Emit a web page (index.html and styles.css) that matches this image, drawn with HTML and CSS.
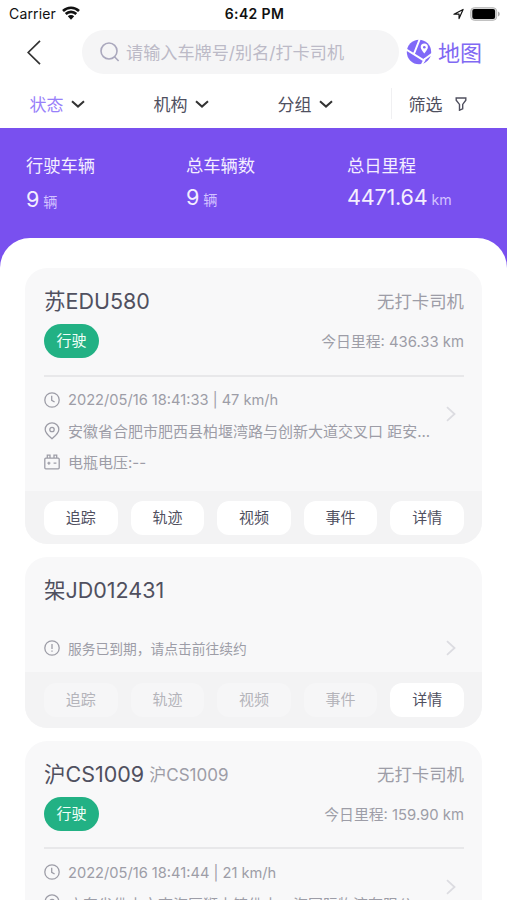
FILE: index.html
```html
<!DOCTYPE html>
<html lang="zh-CN">
<head>
<meta charset="utf-8">
<meta name="viewport" content="width=device-width, initial-scale=1">
<title>车辆列表</title>
<link rel="stylesheet" href="styles.css">
</head>
<body>
<svg class="defs" aria-hidden="true">
  <symbol id="down" viewBox="0 0 14 8"><path d="M1 1.2L7 6.6L13 1.2"/></symbol>
  <symbol id="right" viewBox="0 0 10 16"><path d="M1 1.2L8.5 8L1 14.8"/></symbol>
  <symbol id="clock" viewBox="0 0 16 16"><circle cx="8" cy="8" r="7.2"/><path d="M7.7 3.7V8.3L10.6 10"/></symbol>
  <symbol id="pin" viewBox="0 0 16 18"><path d="M8 16.7C5.5 14.5 1.2 11.2 1.2 7.4A6.8 6.6 0 0 1 14.8 7.4C14.8 11.2 10.5 14.5 8 16.7Z"/><circle cx="8" cy="7.5" r="2.2"/></symbol>
  <symbol id="battery" viewBox="0 0 16 16"><rect x=".8" y="4.2" width="14.4" height="10.6" rx="1"/><path d="M3.3 4V1.2H6V4M10 4V1.2H12.7V4M3.4 9.2H6.4M4.9 7.7V10.7M9.6 9.2H12.4"/></symbol>
  <symbol id="alert" viewBox="0 0 16 16"><circle cx="8" cy="8" r="7.2"/><path d="M8 4V9M8 10.4V11.8"/></symbol>
</svg>

<div class="status-bar">
  <div class="carrier">Carrier
    <svg class="wifi" viewBox="0 0 18 14"><path d="M1 5A11.5 11.5 0 0 1 17 5M3.7 8A7.6 7.6 0 0 1 14.3 8"/><path class="solid" d="M5.8 10.3A4.6 4.6 0 0 1 12.2 10.3L9 13.8Z"/></svg>
  </div>
  <div class="time">6:42 PM</div>
  <div class="power">
    <svg class="locate" viewBox="0 0 12 12"><path d="M1 6.2L11 1L6.6 11V6.2Z"/></svg>
    <svg class="cell" viewBox="0 0 30 14"><rect class="shell" x=".7" y=".7" width="26" height="12.6" rx="3.6"/><rect x="2.3" y="2.1" width="22.8" height="9.8" rx="2"/><path class="tip" d="M28 4.6Q29.8 5.4 29.8 7T28 9.4Z"/></svg>
  </div>
</div>

<header class="header">
  <svg class="back" viewBox="0 0 14 25"><path d="M13 .8L1.2 12.5L13 24.2"/></svg>
  <div class="search">
    <svg viewBox="0 0 20 20"><circle cx="9" cy="9" r="8"/><path d="M14.5 14.8L18.6 19"/></svg>
    <span>请输入车牌号/别名/打卡司机</span>
  </div>
  <div class="map">
    <svg viewBox="0 0 26 26"><circle class="globe" cx="13" cy="13" r="12.2"/><path class="road" d="M-1 9.8L19 22.2M13.8 0L7.5 16M19 19.5L15.2 27M17.5 21L26 14.8"/><path class="marker" d="M18.3 14.4C16.4 11.8 14.7 10 14.7 8.2A3.6 3.6 0 0 1 21.9 8.2C21.9 10 20.2 11.8 18.3 14.4Z"/><circle class="globe" cx="18.3" cy="8.3" r="1.3"/></svg>
    <span>地图</span>
  </div>
</header>

<nav class="filters">
  <div class="filter active">状态<svg><use href="#down"/></svg></div>
  <div class="filter">机构<svg><use href="#down"/></svg></div>
  <div class="filter">分组<svg><use href="#down"/></svg></div>
  <div class="sift">筛选<svg viewBox="0 0 12 14"><path d="M1.2 1H10.8V3.2L7.7 7.4V11.8L4.5 13.2V7.4L1.2 3.2Z"/></svg></div>
</nav>

<section class="summary">
  <div class="stat low"><div class="label">行驶车辆</div><div class="value"><span>9</span><small>辆</small></div></div>
  <div class="stat"><div class="label">总车辆数</div><div class="value"><span>9</span><small>辆</small></div></div>
  <div class="stat"><div class="label">总日里程</div><div class="value"><span>4471.64</span><small>km</small></div></div>
</section>

<main class="list">
  <article class="card">
    <div class="head"><h2>苏EDU580</h2><span class="driver">无打卡司机</span></div>
    <div class="state"><span class="pill">行驶</span><span class="mileage">今日里程: 436.33 km</span></div>
    <div class="info">
      <div class="rows">
        <div class="row"><svg><use href="#clock"/></svg><span class="stamp">2022/05/16 18:41:33 | 47 km/h</span></div>
        <div class="row"><svg class="tall"><use href="#pin"/></svg><span>安徽省合肥市肥西县柏堰湾路与创新大道交叉口 距安...</span></div>
        <div class="row"><svg><use href="#battery"/></svg><span>电瓶电压:--</span></div>
      </div>
      <svg class="go"><use href="#right"/></svg>
    </div>
    <div class="actions"><button>追踪</button><button>轨迹</button><button>视频</button><button>事件</button><button>详情</button></div>
  </article>

  <article class="card expired">
    <div class="head"><h2>架JD012431</h2></div>
    <div class="info">
      <div class="rows">
        <div class="row notice"><svg><use href="#alert"/></svg><span>服务已到期，请点击前往续约</span></div>
      </div>
      <svg class="go"><use href="#right"/></svg>
    </div>
    <div class="actions"><button disabled>追踪</button><button disabled>轨迹</button><button disabled>视频</button><button disabled>事件</button><button>详情</button></div>
  </article>

  <article class="card partial">
    <div class="head"><h2>沪CS1009</h2><span class="alias">沪CS1009</span><span class="driver">无打卡司机</span></div>
    <div class="state"><span class="pill">行驶</span><span class="mileage">今日里程: 159.90 km</span></div>
    <div class="info">
      <div class="rows">
        <div class="row"><svg><use href="#clock"/></svg><span class="stamp">2022/05/16 18:41:44 | 21 km/h</span></div>
        <div class="row"><svg class="tall"><use href="#pin"/></svg><span>广东省佛山市南海区狮山镇佛山一海国际物流有限公...</span></div>
      </div>
      <svg class="go"><use href="#right"/></svg>
    </div>
  </article>
</main>
</body>
</html>
```

FILE: styles.css
```css
* { box-sizing: border-box; }
body {
  display: flex;
  flex-direction: column;
  margin: 0;
  height: 900px;
  overflow: hidden;
  background: #fff;
  color: #50505f;
  font-family: Inter, "Noto Sans CJK SC", sans-serif;
  font-size: 15px;
}
svg { display: block; flex: none; fill: none; stroke: currentColor; }
.defs { display: none; }

.status-bar {
  display: grid;
  flex: none;
  grid-template-columns: 1fr auto 1fr;
  align-items: center;
  height: 28px;
  padding: 0 7px 1px 9px;
  color: #111;
  font-size: 14px;
}
.carrier { display: flex; align-items: center; gap: 6px; letter-spacing: .15px; }
.wifi { width: 18px; height: 14px; margin-top: -2px; stroke-width: 2.6; }
.wifi .solid { fill: currentColor; stroke: none; }
.time { font-weight: 600; letter-spacing: .35px; }
.power { display: flex; align-items: center; justify-content: flex-end; gap: 6px; }
.locate { width: 11px; height: 12px; stroke-width: 1.3; stroke-linejoin: round; }
.cell { width: 30px; height: 14px; fill: #000; stroke: none; }
.cell .shell { fill: #ddd; stroke: #b5b5b5; }
.cell .tip { fill: #aaa; }

.header { display: flex; flex: none; align-items: center; height: 48px; padding-left: 27px; }
.back { width: 14px; height: 25px; color: #333; stroke-width: 1.7; }
.search {
  display: flex;
  align-items: center;
  gap: 6px;
  width: 317px;
  height: 44px;
  margin-left: 41px;
  padding-left: 18px;
  border-radius: 22px;
  background: #f5f5f6;
  color: #bcbac7;
  font-size: 17.15px;
  white-space: nowrap;
}
.search span { margin-top: -1px; }
.search svg { width: 20px; height: 20px; stroke: #aaa8bd; stroke-width: 1.6; }
.map { display: flex; align-items: center; gap: 6px; margin-left: 7px; color: #8069f3; font-size: 22px; }
.map span { margin-top: -2px; }
.map svg { width: 26px; height: 26px; stroke: none; }
.map .globe { fill: #8069f8; }
.map .road { stroke: #fff; stroke-width: 2; }
.map .marker { fill: #fff; }

.filters { display: flex; flex: none; align-items: center; height: 52px; padding: 3px 0 0 29.5px; font-size: 17px; }
.filter { display: flex; align-items: center; gap: 7px; width: 124px; }
.filter svg { width: 14px; height: 8px; color: #333; stroke-width: 2; }
.active { color: #9880fa; }
.sift {
  display: flex;
  align-items: center;
  gap: 12px;
  height: 31px;
  margin-left: -11px;
  padding-left: 17px;
  border-left: 1px solid #f0f0f2;
}
.sift svg { width: 12px; height: 14px; stroke-width: 1.4; }

.summary {
  display: grid;
  flex: none;
  grid-template-columns: 160px 161px 1fr;
  height: 140px;
  padding: 25px 0 0 26px;
  background: #7950ef;
  color: #f4eeff;
}
.label { height: 26px; line-height: 26px; font-size: 17.3px; }
.value {
  display: flex;
  align-items: baseline;
  gap: 4px;
  height: 30px;
  margin-top: 3px;
  line-height: 30px;
  font-size: 21.6px;
  white-space: nowrap;
}
.value span { letter-spacing: -.2px; }
.low .value { margin-top: 5px; }
.value small { color: #d3c2ff; font-size: 14.2px; line-height: 20px; }

.list {
  position: relative;
  display: flex;
  flex: 1;
  flex-direction: column;
  gap: 13px;
  min-height: 0;
  margin-top: -30px;
  padding: 30px 25px 0;
  border-radius: 30px 30px 0 0;
  background: #fff;
  overflow: hidden;
}
.card { flex: none; height: 276px; border-radius: 22px; background: #f8f8f9; overflow: hidden; color: #9d9da7; }
.head { display: flex; align-items: center; height: 56px; padding: 9px 18px 0 19px; }
h2 { margin: 0; color: #50505f; font-size: 21.5px; font-weight: 400; line-height: 32px; }
.alias { margin: -1px 0 0 5px; font-size: 17px; }
.driver { margin: -1px 0 0 auto; font-size: 17.4px; }
.state { display: flex; justify-content: space-between; align-items: center; height: 33px; padding: 0 18px 0 19px; }
.pill { width: 55px; height: 34px; border-radius: 17px; background: #22b184; color: #effff8; line-height: 34px; text-align: center; }
.mileage { margin-top: -1px; font-size: 14.85px; }
.info {
  display: flex;
  align-items: center;
  justify-content: space-between;
  height: 116px;
  margin: 18px 18px 0 19px;
  border-top: 2px solid #e8e8ea;
}
.row { display: flex; align-items: center; gap: 8px; height: 31px; white-space: nowrap; }
.rows { height: 106px; }
.rows .row:first-child { margin-top: 3px; }
.row svg { width: 16px; height: 16px; stroke-width: 1.3; }
.row .tall { height: 18px; }
.stamp { padding-top: 1px; font-size: 14.65px; }
.go { width: 10px; height: 16px; margin: -40px 8px 0 0; color: #dcdce1; stroke-width: 1.8; }
.actions { display: grid; grid-template-columns: repeat(5, 1fr); gap: 13px; height: 53px; padding: 10px 18px 9px 19px; background: #f3f3f4; }
button { padding: 0; border: 0; border-radius: 12px; background: #fff; color: #50505f; font: inherit; line-height: 34px; }
button:disabled { background: #f6f6f7; color: #b4b4ba; }

.expired { height: 171px; }
.expired .info { height: 47px; margin-top: 12px; border: 0; }
.expired .rows { height: 47px; }
.expired .rows .row { margin-top: 7px; }
.expired .go { margin-top: -1px; }
.expired .actions { height: 56px; padding: 11px 18px 11px 19px; }
.notice { font-size: 13.75px; }

.partial { height: 159px; border-radius: 22px 22px 0 0; }
.partial .info { height: 117px; margin-top: 17px; }
```
